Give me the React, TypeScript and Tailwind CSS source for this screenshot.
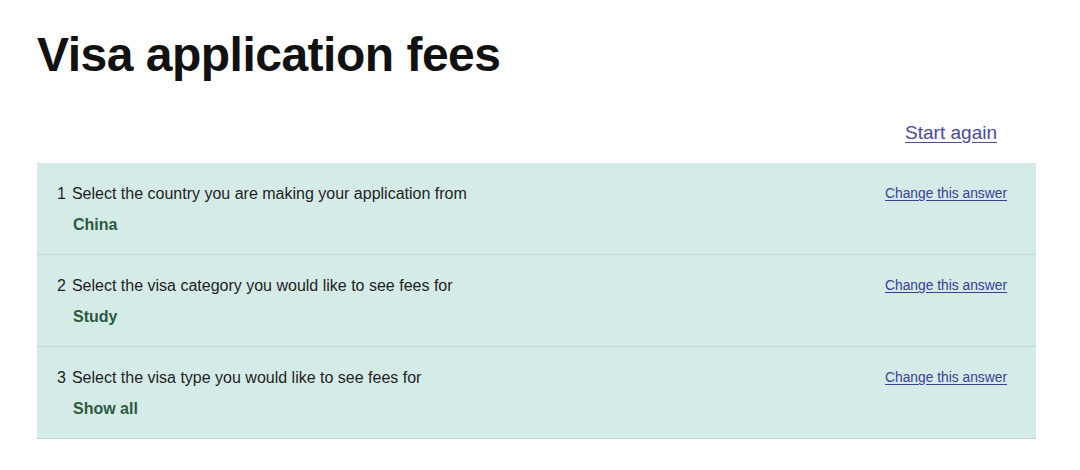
export default function App() {
    const rows = [
        { n: "1", q: "Select the country you are making your application from", a: "China" },
        { n: "2", q: "Select the visa category you would like to see fees for", a: "Study" },
        { n: "3", q: "Select the visa type you would like to see fees for", a: "Show all" },
    ]

    return (
        <div className="w-[1080px] h-[470px] bg-white font-['Liberation_Sans',Arial,sans-serif] text-[#0b0c0c]">
            <div className="pl-[37px] pr-[44px] pt-[25px]">
                <h1 className="text-[48px] leading-[60px] font-bold tracking-[-0.5px] text-[#111]">
                    Visa application fees
                </h1>
                <div className="flex justify-end mt-[36px] pr-[39px]">
                    <a href="#" className="text-[19px] leading-[24px] text-[#4a4a9e] underline underline-offset-[3px]">
                        Start again
                    </a>
                </div>
                <div className="mt-[18px] bg-[#d5ebe8]">
                    {rows.map(function (r) {
                        return (
                            <div key={r.n} className="h-[92px] border-b border-[#bddbd6] flex justify-between pl-[20px] pr-[29px] pt-[22px]">
                                <div>
                                    <div className="text-[16px] leading-[18px] text-[#1f1f1f]">
                                        <span className="mr-[6px]">{r.n}</span>
                                        {r.q}
                                    </div>
                                    <div className="mt-[13px] ml-[16px] text-[16px] leading-[18px] font-bold text-[#2c5a3f]">
                                        {r.a}
                                    </div>
                                </div>
                                <a href="#" className="text-[13.8px] leading-[16px] mt-[1px] text-[#3c3c98] underline underline-offset-2">
                                    Change this answer
                                </a>
                            </div>
                        )
                    })}
                </div>
            </div>
        </div>
    )
}
